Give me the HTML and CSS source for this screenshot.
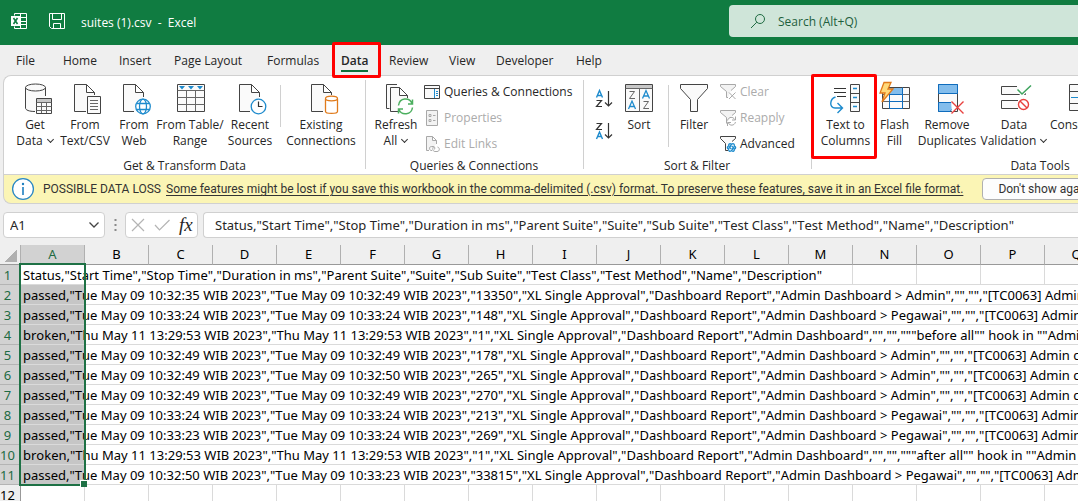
FILE: index.html
```html
<!DOCTYPE html>
<html lang="en">
<head>
<meta charset="utf-8">
<title>suites (1).csv - Excel</title>
<link rel="stylesheet" href="styles.css">
</head>
<body>
<header class="titlebar">
  <svg class="app-icon" width="18" height="18" viewBox="0 0 18 18" fill="none" stroke="#fff">
    <path d="M4.500 3.500V1.500H16.500V16.500H4.500V14.500M10.500 1.500V16.500M10.500 5.500H16.500M10.500 9.500H16.500M10.500 12.500H16.500"/>
    <rect x="1" y="4" width="9" height="10" fill="#fff" stroke="none"/>
    <path d="M3.500 6L7.500 12M7.500 6L3.500 12" stroke="#107c41" stroke-width="1.600"/>
  </svg>
  <button class="save" aria-label="Save">
    <svg width="18" height="18" viewBox="0 0 18 18" fill="none" stroke="#fff">
      <path d="M1.500 1.500H16.500V16.500H3.500L1.500 14.500ZM4.500 1.500V7.500H13.500V1.500M5.500 16.500V11.500H12.500V16.500"/>
    </svg>
  </button>
  <span class="doc-title">suites (1).csv&nbsp; -&nbsp; Excel</span>
  <label class="search">
    <svg width="16" height="16" viewBox="0 0 16 16" fill="none" stroke="#1f6b42"><circle cx="10" cy="6" r="4.500"/><path d="M6.800 9.200L1 15"/></svg>
    <input type="text" placeholder="Search (Alt+Q)" aria-label="Search">
  </label>
</header>

<nav class="tabs">
  <button>File</button><button>Home</button><button>Insert</button><button>Page Layout</button><button>Formulas</button><button class="active marked">Data</button><button>Review</button><button>View</button><button>Developer</button><button>Help</button>
</nav>

<section class="ribbon">
  <div class="group group-get">
    <div class="tools">
      <button class="tool">
        <svg class="icon" viewBox="0 0 32 32">
          <path class="page" d="M16 29.500C10 29.500 6.500 28 6.500 26V5.500H26.500V14"/>
          <ellipse class="page" cx="16.500" cy="5.500" rx="10" ry="3.500"/>
          <path class="page" d="M17.500 16.500H32.500V31.500H17.500Z"/><path d="M18 17H32V20H18Z" fill="#c8c8c8"/>
          <path class="line" d="M17.500 20.500H32.500M17.500 24.500H32.500M17.500 28.500H32.500M22.500 20.500V31M27.500 20.500V31"/>
        </svg>
        <span>Get<br>Data <i class="caret"></i></span>
      </button>
      <button class="tool">
        <svg class="icon" viewBox="0 0 32 32">
          <path class="page" d="M17 29.500H5.500V2.500H17.500L25.500 10.500V13M17.500 2.500V10.500H25.500"/>
          <path class="page" d="M18.500 14.500H31.500V31.500H18.500Z"/>
          <path class="line" d="M21 18.500H29M21 21.500H29M21 24.500H29M21 27.500H29"/>
        </svg>
        <span>From<br>Text/CSV</span>
      </button>
      <button class="tool">
        <svg class="icon" viewBox="0 0 32 32">
          <path class="page" d="M16 29.500H5.500V2.500H17.500L25.500 10.500V15M17.500 2.500V10.500H25.500"/>
          <g fill="#fff" stroke="#1e8bcd" stroke-width="1.300"><circle cx="25" cy="24.500" r="7.300"/><ellipse cx="25" cy="24.500" rx="3.500" ry="7.300"/><path d="M18.500 21.500H31.500M18.500 27.500H31.500"/></g>
        </svg>
        <span>From<br>Web</span>
      </button>
      <button class="tool">
        <svg class="icon" viewBox="0 0 32 32">
          <path class="page" d="M3.500 2.500H30.500V29.500H3.500Z"/><path class="line" d="M3.500 8.500H30.500M3.500 15.500H30.500M3.500 22.500H30.500M12.500 8.500V29M21.500 8.500V29"/>
          <path d="M5 4H11L8 7.500ZM14 4H20L17 7.500ZM23 4H29L26 7.500Z" fill="#1e8bcd"/>
        </svg>
        <span>From Table/<br>Range</span>
      </button>
      <button class="tool">
        <svg class="icon" viewBox="0 0 32 32">
          <path class="page" d="M16 29.500H5.500V2.500H17.500L25.500 10.500V15M17.500 2.500V10.500H25.500"/>
          <circle cx="24.500" cy="24.500" r="7.300" fill="#fff" stroke="#1e8bcd" stroke-width="1.300"/><path class="dark" d="M24.500 19.500V24.500H28.500"/>
        </svg>
        <span>Recent<br>Sources</span>
      </button>
      <div class="rule"></div>
      <button class="tool">
        <svg class="icon" viewBox="0 0 32 32">
          <path class="page" d="M18 29.500H6.500V2.500H18.500L26.500 10.500V13M18.500 2.500V10.500H26.500"/>
          <path d="M20.500 17V29.500C20.500 32 32.500 32 32.500 29.500V17" fill="#fff" stroke="#e07a1a" stroke-width="1.300"/><ellipse cx="26.500" cy="16.500" rx="6" ry="2.300" fill="#fff" stroke="#e07a1a" stroke-width="1.300"/>
        </svg>
        <span>Existing<br>Connections</span>
      </button>
    </div>
    <h2>Get &amp; Transform Data</h2>
  </div>

  <div class="group group-queries">
    <div class="tools">
      <button class="tool">
        <svg class="icon" viewBox="0 0 32 32">
          <path class="page" d="M9.500 26.500H6.500V2.500H17"/><path class="page" d="M18 29.500H10.500V5.500H19.500L27.500 13.500V16M19.500 5.500V13.500H27.500"/>
          <circle cx="25.500" cy="24.500" r="8" fill="#fff"/>
          <path d="M18.500 23.500C19.500 15.500 29.500 15 32 21.500M32.500 17.500V22H28M32.500 25.500C31.500 33 21.500 34 19 27.500M18.500 31.500V27H23" fill="none" stroke="#4caf5f" stroke-width="1.500"/>
        </svg>
        <span>Refresh<br>All <i class="caret"></i></span>
      </button>
      <div class="stack">
        <button>
          <svg width="16" height="16" viewBox="0 0 16 16"><path class="page" d="M.5 1.500H15.500V14.500H.5ZM.5 4.500H15.500"/><path d="M10.500 5V14M12 7.500H14M12 9.500H14M12 11.500H14" stroke="#1e8bcd"/></svg>
          Queries &amp; Connections
        </button>
        <button disabled>
          <svg width="16" height="16" viewBox="0 0 16 16" fill="#f3f3f3" stroke="#a8a8a8"><path d="M2.500 .5H13.500V15.500H2.500ZM5 4.500H7V6.500H5ZM5 9.500H7V11.500H5ZM9 5.500H11.500M9 10.500H11.500"/></svg>
          Properties
        </button>
        <button disabled>
          <svg width="16" height="16" viewBox="0 0 16 16" fill="#f3f3f3" stroke="#a8a8a8"><path d="M5 14.500H2.500V.5H8.500L12.500 4.500V8M8.500 .5V4.500H12.500"/><path fill="none" d="M8 14.500C5 15 4.500 10.500 7.500 10.500H9C11 10.500 11.500 13 10 13.500M10 10.500C8 12 8.500 15.500 11 15.500H13C16 15.500 16 11.500 13.500 11"/></svg>
          Edit Links
        </button>
      </div>
    </div>
    <h2>Queries &amp; Connections</h2>
  </div>

  <div class="group group-sort">
    <div class="tools">
      <div class="sorts">
        <button aria-label="Sort A to Z"><svg width="18" height="20" viewBox="0 0 18 20" fill="none"><path d="M1.500 8.500L4.500 1.500L7.500 8.500M2.500 6.500H6.500" stroke="#1e8bcd" stroke-width="1.400"/><path class="dark" d="M1.500 11.500H6.500L1.500 17.500H7M13.500 2V17M10 13.500L13.500 17L17 13.500"/></svg></button>
        <button aria-label="Sort Z to A"><svg width="18" height="20" viewBox="0 0 18 20" fill="none"><path d="M1.500 18L4.500 11L7.500 18M2.500 15.500H6.500" stroke="#1e8bcd" stroke-width="1.400"/><path class="dark" d="M1.500 2.500H6.500L1.500 8.500H7M13.500 2V17M10 13.500L13.500 17L17 13.500"/></svg></button>
      </div>
      <button class="tool">
        <svg class="icon" viewBox="0 0 32 32">
          <path class="page" d="M2.500 2.500H29.500V29.500H2.500Z"/><path d="M3 3H29V6H3Z" fill="#c8c8c8"/><path class="line" d="M2.500 6.500H29.500M16.500 6.500V29.500"/>
          <path d="M5.500 27L9 19L12.500 27M7 24.500H11M19.500 16.500L23 8.500L26.500 16.500M21 14H25" fill="none" stroke="#1e8bcd" stroke-width="1.300"/>
          <path class="line" d="M6.500 9.500H11.500L6.500 16.500H12M20.500 19.500H25.500L20.500 26.500H26"/>
        </svg>
        <span>Sort</span>
      </button>
      <div class="rule long"></div>
      <button class="tool">
        <svg class="icon" viewBox="0 0 32 32"><path class="page" d="M2.500 2.500H29.500V6.500L19.500 17.500V29.500H12.500V17.500L2.500 6.500Z"/></svg>
        <span>Filter</span>
      </button>
      <div class="stack">
        <button disabled>
          <svg width="16" height="16" viewBox="0 0 16 16" fill="#f3f3f3" stroke="#a8a8a8"><path d="M8 13.500H6.500V7.500L.5 2.500V.5H15.500V2.500L11 6.500"/><path d="M9 8.500L15.500 15M15.500 8.500L9 15"/></svg>
          Clear
        </button>
        <button disabled>
          <svg width="16" height="16" viewBox="0 0 16 16" fill="#f3f3f3" stroke="#a8a8a8"><path d="M6.500 13.500V7.500L.5 2.500V.5H15.500V2.500L12 5.500"/><path fill="none" d="M7.500 10.500C8.500 6.500 13.500 6.500 14.500 9.500M15.500 6.500V10H12M15.500 12C14.500 16 9.500 16 8.500 13M7.500 16V12.500H11"/></svg>
          Reapply
        </button>
        <button>
          <svg width="16" height="16" viewBox="0 0 16 16"><path class="page" d="M8 14.500H5.500V7.500L.5 2.500V.5H15.500V2.500L12 5.500"/><g fill="#fff" stroke="#1e8bcd" stroke-width="1.200"><ellipse cx="11.500" cy="11.500" rx="4.200" ry="2"/><ellipse cx="11.500" cy="11.500" rx="4.200" ry="2" transform="rotate(60 11.500 11.500)"/><ellipse cx="11.500" cy="11.500" rx="4.200" ry="2" transform="rotate(120 11.500 11.500)"/><circle cx="11.500" cy="11.500" r="1.500"/></g></svg>
          Advanced
        </button>
      </div>
    </div>
    <h2>Sort &amp; Filter</h2>
  </div>

  <div class="group group-data">
    <div class="tools">
      <button class="tool marked">
        <svg class="icon" viewBox="0 0 32 32">
          <path class="dark" d="M4 6.500H16M4 10.500H16M7 14.500H16"/>
          <path class="page" d="M20.500 2.500H29.500V29.500H20.500ZM20.500 11.500H29.500M20.500 20.500H29.500"/>
          <path d="M23 6.500H27M23 15.500H27M23 24.500H27M5.500 15C-.5 17 -1 26 5 26H12M7.500 21L12.500 26L7.500 31" fill="none" stroke="#1e8bcd" stroke-width="1.400"/>
        </svg>
        <span>Text to<br>Columns</span>
      </button>
      <button class="tool">
        <svg class="icon" viewBox="0 0 32 32">
          <path class="page" d="M3.500 5.500H30.500V26.500H3.500Z"/><path d="M10 6H23V12H10Z" fill="#83bdec"/>
          <path class="line" d="M23.500 5.500V26.500M3.500 12.500H30.500M3.500 19.500H30.500"/><path d="M10.500 12V26.500M23.500 5.500V26.500M10 12.500H24M10 19.500H24M10.500 26.500H23.500" stroke="#0f6cbd"/>
          <path d="M5 0.500H12L9 7H14L3 20L6 11H1Z" fill="#ffd97a" stroke="#e07a1a" stroke-width="1.300"/>
        </svg>
        <span>Flash<br>Fill</span>
      </button>
      <button class="tool">
        <svg class="icon" viewBox="0 0 32 32">
          <path class="page" d="M7.500 2.500H26.500V29.500H7.500Z"/><path d="M7.500 2.500H26.500V11.500H7.500ZM7.500 20.500H20L23 25L19 29.500H7.500Z" fill="#83bdec" stroke="#0f6cbd"/>
          <path d="M20 20L33 32V19L21 31Z" fill="#fff"/><path d="M20.500 19.500L32.500 31.500M32.500 19.500L20.500 31.500" stroke="#e8413f" stroke-width="1.400"/>
        </svg>
        <span>Remove<br>Duplicates</span>
      </button>
      <button class="tool">
        <svg class="icon" viewBox="0 0 32 32">
          <path class="page" d="M19 4.500H3.500V12.500H27.500V10M20 18.500H3.500V26.500H20"/>
          <path d="M19.500 7.500L24 12L33 3.500" fill="none" stroke="#fff" stroke-width="4"/><path d="M19.500 7.500L24 12L33 3.500" fill="none" stroke="#3da35d" stroke-width="1.500"/>
          <g fill="#fff" stroke="#e8413f" stroke-width="1.400"><circle cx="25.500" cy="22.500" r="5"/><path d="M22 19L29 26"/></g>
        </svg>
        <span>Data<br>Validation <i class="caret"></i></span>
      </button>
      <button class="tool">
        <svg class="icon" viewBox="0 0 32 32">
          <path class="page" d="M2.500 2.500H13.500V28.500H2.500ZM2.500 9.500H13.500M2.500 21.500H13.500"/><path d="M4 15.500H20" stroke="#1e8bcd"/>
        </svg>
        <span>Consolidate</span>
      </button>
    </div>
    <h2>Data Tools</h2>
  </div>
</section>

<section class="message">
  <svg width="24" height="24" viewBox="0 0 24 24"><circle cx="12" cy="12" r="10.400" fill="#fff" stroke="#2b88c4" stroke-width="1.300"/><path d="M12 10V18" stroke="#1e7fc0" stroke-width="1.600"/><circle cx="12" cy="7" r="1.200" fill="#1e7fc0"/></svg>
  <strong>POSSIBLE DATA LOSS</strong>
  <a href="#">Some features might be lost if you save this workbook in the comma-delimited (.csv) format. To preserve these features, save it in an Excel file format.</a>
  <button>Don't show again</button>
</section>

<section class="formula-bar">
  <div class="box name-box">
    <input type="text" value="A1" aria-label="Name box">
    <button aria-label="Open name list"><svg width="12" height="8" viewBox="0 0 12 8" fill="none" stroke="#444" stroke-width="1.300"><path d="M1.500 1.500L6 6L10.500 1.500"/></svg></button>
  </div>
  <svg class="grip" width="3" height="12" viewBox="0 0 3 12" fill="#8a8a8a"><path d="M.5 0H2.500V2H.5ZM.5 5H2.500V7H.5ZM.5 10H2.500V12H.5Z"/></svg>
  <div class="box actions">
    <button aria-label="Cancel"><svg width="14" height="14" viewBox="0 0 14 14" stroke="#b4b4b4" stroke-width="1.200"><path d="M1 1L13 13M13 1L1 13"/></svg></button>
    <button aria-label="Enter"><svg width="16" height="12" viewBox="0 0 16 12" fill="none" stroke="#b4b4b4" stroke-width="1.200"><path d="M1 6L5.500 11L15.500 1"/></svg></button>
    <button class="fx" aria-label="Insert function">fx</button>
  </div>
  <input class="box formula" type="text" aria-label="Formula" value='Status,"Start Time","Stop Time","Duration in ms","Parent Suite","Suite","Sub Suite","Test Class","Test Method","Name","Description"'>
</section>

<main class="sheet">
  <table>
    <colgroup><col class="row-col"><col span="17" class="cell-col"></colgroup>
    <thead>
      <tr><th class="corner"></th><th class="selected">A</th><th>B</th><th>C</th><th>D</th><th>E</th><th>F</th><th>G</th><th>H</th><th>I</th><th>J</th><th>K</th><th>L</th><th>M</th><th>N</th><th>O</th><th>P</th><th>Q</th></tr>
    </thead>
    <tbody>
      <tr><th>1</th><td class="current">Status,"Start Time","Stop Time","Duration in ms","Parent Suite","Suite","Sub Suite","Test Class","Test Method","Name","Description"</td><td colspan="12"></td><td></td><td></td><td></td><td></td></tr>
      <tr><th>2</th><td>passed,"Tue May 09 10:32:35 WIB 2023","Tue May 09 10:32:49 WIB 2023","13350","XL Single Approval","Dashboard Report","Admin Dashboard &gt; Admin","","","[TC0063] Admin can</td><td colspan="16"></td></tr>
      <tr><th>3</th><td>passed,"Tue May 09 10:33:24 WIB 2023","Tue May 09 10:33:24 WIB 2023","148","XL Single Approval","Dashboard Report","Admin Dashboard &gt; Pegawai","","","[TC0063] Admin can</td><td colspan="16"></td></tr>
      <tr><th>4</th><td>broken,"Thu May 11 13:29:53 WIB 2023","Thu May 11 13:29:53 WIB 2023","1","XL Single Approval","Dashboard Report","Admin Dashboard","","","""before all"" hook in ""Admin</td><td colspan="16"></td></tr>
      <tr><th>5</th><td>passed,"Tue May 09 10:32:49 WIB 2023","Tue May 09 10:32:49 WIB 2023","178","XL Single Approval","Dashboard Report","Admin Dashboard &gt; Admin","","","[TC0063] Admin can</td><td colspan="16"></td></tr>
      <tr><th>6</th><td>passed,"Tue May 09 10:32:49 WIB 2023","Tue May 09 10:32:50 WIB 2023","265","XL Single Approval","Dashboard Report","Admin Dashboard &gt; Admin","","","[TC0063] Admin can</td><td colspan="16"></td></tr>
      <tr><th>7</th><td>passed,"Tue May 09 10:32:49 WIB 2023","Tue May 09 10:32:49 WIB 2023","270","XL Single Approval","Dashboard Report","Admin Dashboard &gt; Admin","","","[TC0063] Admin can</td><td colspan="16"></td></tr>
      <tr><th>8</th><td>passed,"Tue May 09 10:33:24 WIB 2023","Tue May 09 10:33:24 WIB 2023","213","XL Single Approval","Dashboard Report","Admin Dashboard &gt; Pegawai","","","[TC0063] Admin can</td><td colspan="16"></td></tr>
      <tr><th>9</th><td>passed,"Tue May 09 10:33:23 WIB 2023","Tue May 09 10:33:24 WIB 2023","269","XL Single Approval","Dashboard Report","Admin Dashboard &gt; Pegawai","","","[TC0063] Admin can</td><td colspan="16"></td></tr>
      <tr><th>10</th><td>broken,"Thu May 11 13:29:53 WIB 2023","Thu May 11 13:29:53 WIB 2023","1","XL Single Approval","Dashboard Report","Admin Dashboard","","","""after all"" hook in ""Admin</td><td colspan="16"></td></tr>
      <tr><th>11</th><td>passed,"Tue May 09 10:32:50 WIB 2023","Tue May 09 10:33:23 WIB 2023","33815","XL Single Approval","Dashboard Report","Admin Dashboard &gt; Pegawai","","","[TC0063] Admin can</td><td colspan="16"></td></tr>
      <tr class="empty"><th>12</th><td></td><td></td><td></td><td></td><td></td><td></td><td></td><td></td><td></td><td></td><td></td><td></td><td></td><td></td><td></td><td></td><td></td></tr>
    </tbody>
  </table>
  <div class="selection"></div>
</main>
</body>
</html>
```
FILE: styles.css
```css
* { box-sizing: border-box; }
html, body { height: 100%; }
body {
  margin: 0;
  display: flex;
  flex-direction: column;
  overflow: hidden;
  background: #efefef;
  color: #262626;
  font: 12px/16px "Open Sans", "Noto Sans", sans-serif;
}
button, input { font: inherit; font-kerning: inherit; color: inherit; }
button { padding: 0; border: 0; background: none; white-space: nowrap; }
input { min-width: 0; padding: 0; border: 0; outline: 0; background: none; }
svg { display: block; flex: none; overflow: visible; }
h2 { margin: 0; font: inherit; text-align: center; }

.titlebar { flex: none; display: flex; align-items: center; height: 45px; padding-left: 10px; background: #107c41; color: #fff; }
.save { margin-left: 20px; }
.app-icon, .save { margin-bottom: 3px; }
.doc-title { flex: 1 0 auto; margin-left: 15px; }
.search { flex: none; display: flex; align-items: center; gap: 12px; width: 349px; height: 32px; margin-bottom: 3px; padding-left: 21px; border-radius: 4px 0 0 4px; background: #cfe5d9; color: #1f5f3d; }
.search input { flex: 1; padding-top: 2px; }
.search input::placeholder { color: #1f5f3d; opacity: 1; }

.tabs { flex: none; display: grid; grid-template-columns: 47px 56px 55px 93px 74px 48px 60px 47px 80px 40px; height: 30px; padding-left: 16px; }
.tabs button { position: relative; justify-self: start; padding-top: 2px; line-height: 28px; }
.tabs .active { font-weight: 600; }
.tabs .active::before { content: ""; position: absolute; left: 0; right: 0; bottom: 3px; height: 2px; background: #0f703b; }
.marked { position: relative; }
.marked::after { content: ""; position: absolute; z-index: 2; border: 3px solid #f00; border-radius: 2px; }
.tabs .marked::after { inset: -3px -13px -3px -9px; }

.ribbon { flex: none; display: flex; margin-left: 3px; border: 1px solid #d0d0d0; border-right: 0; border-radius: 8px 0 0 0; background: #fff; }
.group { flex: none; padding: 4px 0 0; position: relative; }
.group + .group::before { content: ""; position: absolute; left: 0; top: 4px; bottom: 5px; width: 1px; background: #d0d0d0; }
.group-get { width: 361px; }
.group-queries { width: 218px; }
.group-sort { width: 228px; }
.group-data { width: 458px; }
.tools { display: grid; height: 78px; padding-left: 6px; }
.group-get .tools { grid-template-columns: 50px 50px 48px 64px 56px 4px 78px; }
.group-queries .tools { grid-template-columns: 48px 1fr; padding-left: 7px; }
.group-sort .tools { padding-left: 10px; grid-template-columns: 22px 48px 11px 40px 1fr; }
.group-data .tools { padding-left: 4px; grid-template-columns: 61px 37px 68px 66px 72px; }
.tool { display: flex; flex-direction: column; align-items: center; justify-content: flex-start; gap: 3px; padding-top: 2px; }
.tool > span { margin: 0 -10px; }
.icon { width: 32px; height: 32px; }
.group-data .marked::after { inset: -6px -1px -1px -4px; }
.page { fill: #fafafa; stroke: #444; }
.line { fill: none; stroke: #666; }
.dark { fill: none; stroke: #333; stroke-width: 1.2px; }
.caret { display: inline-block; width: 5px; height: 5px; margin: 0 1px 3px 2px; border: solid #333; border-width: 0 1px 1px 0; transform: rotate(45deg); }
.rule { width: 1px; height: 42px; margin: 5px auto 0; background: #d0d0d0; }
.rule.long { height: 62px; }
.stack { display: flex; flex-direction: column; gap: 10px; padding: 4px 0 0 4px; }
.group-sort .stack { padding-left: 6px; }
.stack button { display: flex; align-items: center; gap: 4px; height: 16px; }
.stack button:disabled { color: #ababab; }
.sorts { display: flex; flex-direction: column; gap: 12px; padding-top: 9px; align-items: center; }

.message { flex: none; display: flex; align-items: center; height: 29px; margin-left: 3px; padding-left: 7px; overflow: hidden; border: 1px solid #d0d0d0; border-width: 0 0 1px 1px; border-radius: 0 0 0 8px; background: #fbf5b5; color: #333; font-family: Roboto, sans-serif; white-space: nowrap; }
.message strong { margin-left: 8px; font-weight: 400; }
.message a { flex: none; margin-left: 5px; color: inherit; text-underline-offset: 2px; }
.message button { flex: none; height: 22px; margin-left: 19px; padding: 0 15px; border: 1px solid #b0b0b0; border-radius: 4px; background: #fdfdfd; }

.formula-bar { flex: none; display: flex; align-items: center; margin-top: 8px; padding-left: 3px; font-family: "Noto Sans", sans-serif; font-size: 13px; font-kerning: none; }
.box { height: 26px; border: 1px solid #d0d0d0; border-radius: 4px; background: #fff; }
.name-box { display: flex; align-items: center; width: 102px; padding: 0 4px 0 6px; }
.name-box input { flex: 1; }
.grip { margin: 0 8px 0 9px; }
.actions { display: flex; align-items: center; gap: 9px; width: 73px; padding-left: 5px; }
.fx { font: italic 400 19px/20px "Liberation Serif", serif; }
.formula { flex: 1; margin-left: 5px; padding-left: 11px; border-right: 0; border-radius: 4px 0 0 4px; }

.sheet { flex: 1; position: relative; min-height: 0; margin-top: 7px; overflow: hidden; color: #000; font: 13px/19px "Noto Sans", sans-serif; font-kerning: none; }
table { width: 1109px; table-layout: fixed; border-collapse: separate; border-spacing: 0; background: #fff; }
.row-col { width: 21px; }
.cell-col { width: 64px; }
th, td { height: 20px; padding: 0; font-weight: 400; white-space: nowrap; border-right: 1px solid #dadada; border-bottom: 1px solid #dadada; }
th { background: #efefef; }
thead th { border-right-color: #b0b0b0; border-bottom-color: #999; }
thead .selected { background: #d2d2d2; color: #1e6b43; }
thead .corner { background: linear-gradient(135deg, transparent 50%, #b0b0b0 50%) 5px 5px / 12px 12px no-repeat #efefef; }
tbody th, tbody td { padding-top: 2px; line-height: 17px; }
tbody th { padding-right: 5px; border-right-color: #999; border-bottom-color: #b4b4b4; background: #d2d2d2; color: #1e6b43; }
tbody td:nth-child(2) { padding-left: 2px; background: #c6c6c6; border-right: 0; }
tbody .current:nth-child(2) { background: #fff; }
.empty th { background: #efefef; color: #000; }
.empty td:nth-child(2) { background: #fff; border-right: 1px solid #dadada; }
.selection { position: absolute; left: 19px; top: 18px; width: 67px; height: 223px; border: 2px solid #1e7145; pointer-events: none; }
.selection::after { content: ""; position: absolute; right: -3px; bottom: -3px; width: 6px; height: 6px; background: #1e7145; border: solid #fff; border-width: 1px 0 0 1px; }
```
